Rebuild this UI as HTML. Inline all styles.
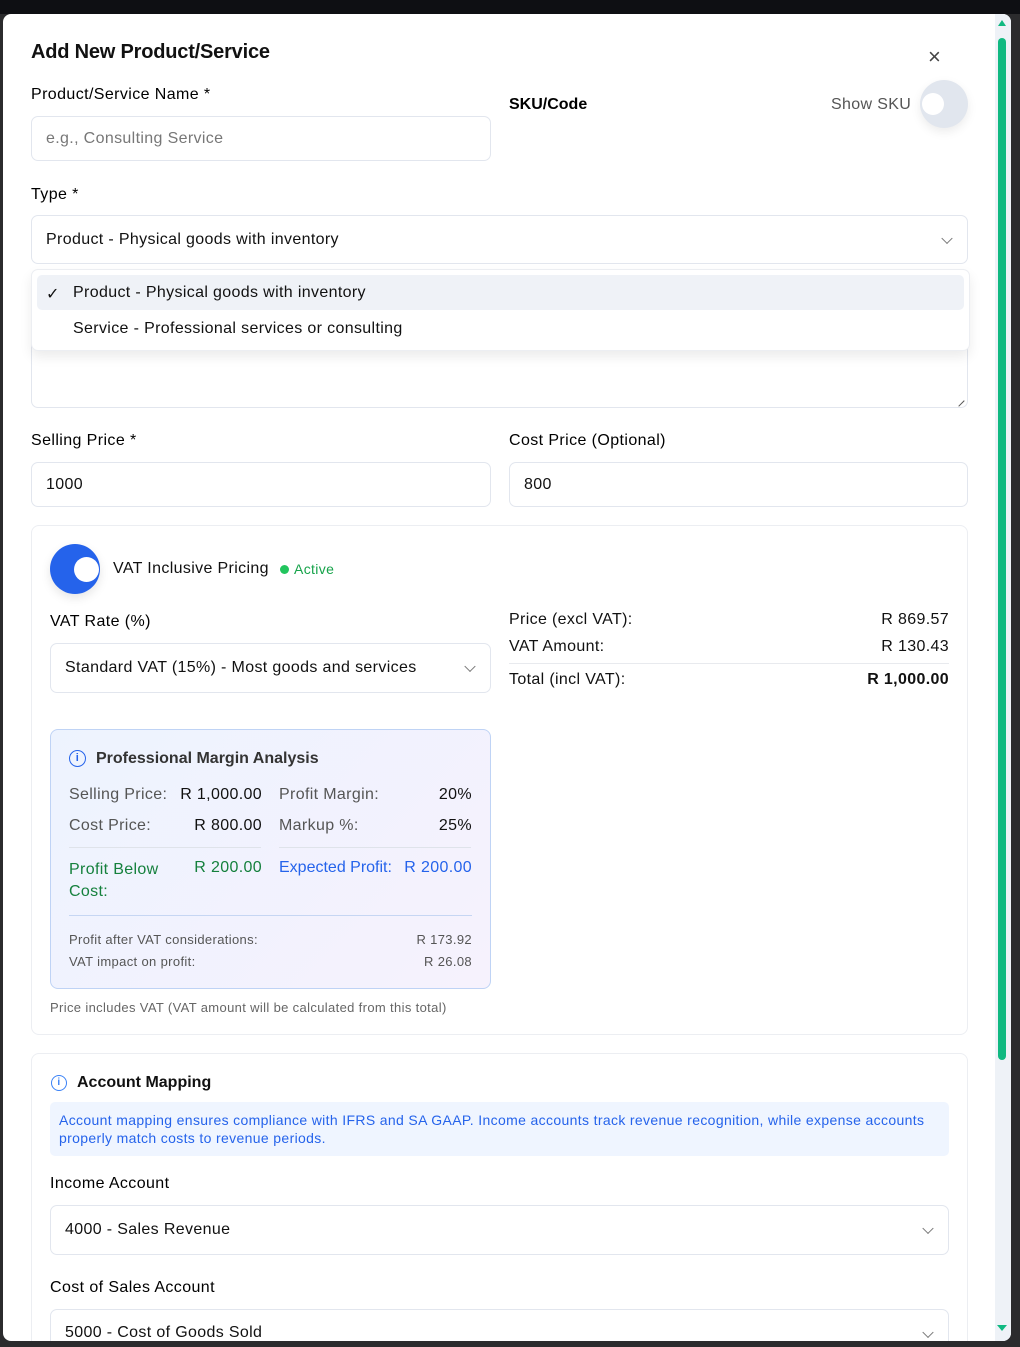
<!DOCTYPE html>
<html><head><meta charset="utf-8"><style>
*{box-sizing:border-box;margin:0;padding:0}
body{width:1020px;height:1347px;background:#2b2b2d;font-family:"Liberation Sans",sans-serif;color:#111;position:relative;overflow:hidden;letter-spacing:0.35px}
.top{position:absolute;left:0;top:0;width:1020px;height:14px;background:#0e0f13}
.modal{position:absolute;left:3px;top:14px;width:1008px;height:1327px;background:#fff;border-radius:8px;overflow:hidden}
.a{position:absolute}
.lbl{font-size:16px;color:#000;font-weight:normal;letter-spacing:0.4px}
.inp{position:absolute;border:1px solid #e2e6ee;border-radius:7px;background:#fff;font-size:16px;padding-left:14px;display:flex;align-items:center}
.chev{position:absolute;right:16px;top:50%;width:8px;height:8px;border-right:1.5px solid #777;border-bottom:1.5px solid #777;transform:translateY(-70%) rotate(45deg)}
.card{position:absolute;border:1px solid #eceef2;border-radius:8px;background:#fff}
.row{position:absolute;font-size:16px}
</style></head><body>
<div class="top"></div>
<div class="modal">
 <div class="a" style="left:28px;top:27px;font-size:20px;font-weight:bold;letter-spacing:-0.2px">Add New Product/Service</div>
 <div class="a" style="left:925px;top:30px;font-size:22px;color:#444;font-weight:300">×</div>
 <div class="a lbl" style="left:28px;top:72px">Product/Service Name *</div>
 <div class="inp" style="left:28px;top:102px;width:460px;height:45px;color:#777">e.g., Consulting Service</div>
 <div class="a lbl" style="left:506px;top:82px;font-weight:bold;letter-spacing:0">SKU/Code</div>
 <div class="a" style="left:828px;top:82px;font-size:16px;color:#555">Show SKU</div>
 <div class="a" style="left:917px;top:66px;width:48px;height:48px;border-radius:50%;background:#e1e6ee;box-shadow:0 4px 10px rgba(0,0,0,.08)"></div>
 <div class="a" style="left:919px;top:79px;width:22px;height:22px;border-radius:50%;background:#fff"></div>
 <div class="a lbl" style="left:28px;top:172px">Type *</div>
 <div class="inp" style="left:28px;top:201px;width:937px;height:49px">Product - Physical goods with inventory<span class="chev"></span></div>
 <div class="a" style="left:28px;top:325px;width:937px;height:69px;border:1px solid #e2e6ee;border-top:none;border-radius:0 0 7px 7px"></div>
 <div class="a" style="left:952px;top:383px;width:8px;height:8px;border-right:1px solid #555;transform:rotate(45deg)"></div>
 <div class="a" style="left:28px;top:255px;width:939px;height:82px;background:#fff;border:1px solid #eceef2;border-radius:7px;box-shadow:0 6px 12px rgba(0,0,0,.08)">
  <div class="a" style="left:5px;top:5px;width:927px;height:35px;background:#eff2f7;border-radius:5px"></div>
  <div class="a" style="left:14px;top:14px;font-size:16px">✓</div>
  <div class="a" style="left:41px;top:14px;font-size:16px">Product - Physical goods with inventory</div>
  <div class="a" style="left:41px;top:50px;font-size:16px">Service - Professional services or consulting</div>
 </div>
 <div class="a lbl" style="left:28px;top:418px">Selling Price *</div>
 <div class="inp" style="left:28px;top:448px;width:460px;height:45px">1000</div>
 <div class="a lbl" style="left:506px;top:418px">Cost Price (Optional)</div>
 <div class="inp" style="left:506px;top:448px;width:459px;height:45px">800</div>

 <div class="card" style="left:28px;top:511px;width:937px;height:510px"></div>
 <div class="a" style="left:47px;top:530px;width:50px;height:50px;border-radius:50%;background:#2563eb;box-shadow:0 4px 10px rgba(0,0,0,.1)"></div>
 <div class="a" style="left:71px;top:543px;width:25px;height:25px;border-radius:50%;background:#fff"></div>
 <div class="a" style="left:110px;top:546px;font-size:16px">VAT Inclusive Pricing</div>
 <div class="a" style="left:277px;top:551px;width:9px;height:9px;border-radius:50%;background:#22c55e"></div>
 <div class="a" style="left:291px;top:547px;font-size:14px;color:#16a34a">Active</div>
 <div class="a lbl" style="left:47px;top:599px">VAT Rate (%)</div>
 <div class="inp" style="left:47px;top:629px;width:441px;height:50px">Standard VAT (15%) - Most goods and services<span class="chev"></span></div>
 <div class="row" style="left:506px;top:597px">Price (excl VAT):</div><div class="row" style="right:62px;top:597px">R 869.57</div>
 <div class="row" style="left:506px;top:624px">VAT Amount:</div><div class="row" style="right:62px;top:624px">R 130.43</div>
 <div class="a" style="left:506px;top:649px;width:440px;height:1px;background:#e8eaee"></div>
 <div class="row" style="left:506px;top:657px">Total (incl VAT):</div><div class="row" style="right:62px;top:657px;font-weight:bold">R 1,000.00</div>

 <div class="a" style="left:47px;top:715px;width:441px;height:260px;border:1px solid #bfd3f5;border-radius:8px;background:linear-gradient(135deg,#edf3fe,#f6f2fd)">
  <div class="a" style="left:18px;top:20px;width:17px;height:17px;border:1.5px solid #2563eb;border-radius:50%;color:#2563eb;font-size:11px;text-align:center;line-height:14px;font-weight:bold">i</div>
  <div class="a" style="left:45px;top:20px;font-size:16px;font-weight:bold;color:#333;letter-spacing:0">Professional Margin Analysis</div>
  <div class="row" style="left:18px;top:56px;color:#555">Selling Price:</div><div class="row" style="right:228px;top:56px">R 1,000.00</div>
  <div class="row" style="left:228px;top:56px;color:#555">Profit Margin:</div><div class="row" style="right:18px;top:56px">20%</div>
  <div class="row" style="left:18px;top:87px;color:#555">Cost Price:</div><div class="row" style="right:228px;top:87px">R 800.00</div>
  <div class="row" style="left:228px;top:87px;color:#555">Markup %:</div><div class="row" style="right:18px;top:87px">25%</div>
  <div class="a" style="left:18px;top:117px;width:192px;height:1px;background:#dfe3ea"></div>
  <div class="a" style="left:228px;top:117px;width:192px;height:1px;background:#dfe3ea"></div>
  <div class="row" style="left:18px;top:129px;color:#15803d;line-height:22px;width:110px">Profit Below Cost:</div>
  <div class="row" style="right:228px;top:129px;color:#15803d">R 200.00</div>
  <div class="row" style="left:228px;top:129px;color:#2563eb;letter-spacing:0">Expected Profit:</div><div class="row" style="right:18px;top:129px;color:#2563eb">R 200.00</div>
  <div class="a" style="left:18px;top:185px;width:403px;height:1px;background:#c6d6f3"></div>
  <div class="a" style="left:18px;top:202px;font-size:13px;color:#555">Profit after VAT considerations:</div><div class="a" style="right:18px;top:202px;font-size:13px;color:#555">R 173.92</div>
  <div class="a" style="left:18px;top:224px;font-size:13px;color:#555">VAT impact on profit:</div><div class="a" style="right:18px;top:224px;font-size:13px;color:#555">R 26.08</div>
 </div>
 <div class="a" style="left:47px;top:986px;font-size:13px;color:#666">Price includes VAT (VAT amount will be calculated from this total)</div>

 <div class="card" style="left:28px;top:1039px;width:937px;height:320px"></div>
 <div class="a" style="left:48px;top:1061px;width:16px;height:16px;border:1.5px solid #3b82f6;border-radius:50%;color:#3b82f6;font-size:10px;text-align:center;line-height:13px;font-weight:bold">i</div>
 <div class="a" style="left:74px;top:1060px;font-size:16px;font-weight:bold;letter-spacing:0">Account Mapping</div>
 <div class="a" style="left:47px;top:1088px;width:899px;height:54px;background:#eff5ff;border-radius:5px;padding:9px 9px;font-size:14px;color:#2563eb;line-height:18px">Account mapping ensures compliance with IFRS and SA GAAP. Income accounts track revenue recognition, while expense accounts properly match costs to revenue periods.</div>
 <div class="a lbl" style="left:47px;top:1161px">Income Account</div>
 <div class="inp" style="left:47px;top:1191px;width:899px;height:50px">4000 - Sales Revenue<span class="chev"></span></div>
 <div class="a lbl" style="left:47px;top:1265px">Cost of Sales Account</div>
 <div class="inp" style="left:47px;top:1295px;width:899px;height:50px;align-items:flex-start;padding-top:14px">5000 - Cost of Goods Sold<span class="chev" style="top:24px"></span></div>

 <div class="a" style="left:992px;top:0;width:16px;height:1327px;background:#eef2f7"></div>
 <div class="a" style="left:995px;top:24px;width:8px;height:1022px;background:#10b981;border-radius:4px"></div>
 <div class="a" style="left:995px;top:6px;width:0;height:0;border-left:4px solid transparent;border-right:4px solid transparent;border-bottom:6px solid #10b981"></div>
 <div class="a" style="left:994px;top:1311px;width:0;height:0;border-left:5px solid transparent;border-right:5px solid transparent;border-top:6px solid #10b981"></div>
</div>
</body></html>
